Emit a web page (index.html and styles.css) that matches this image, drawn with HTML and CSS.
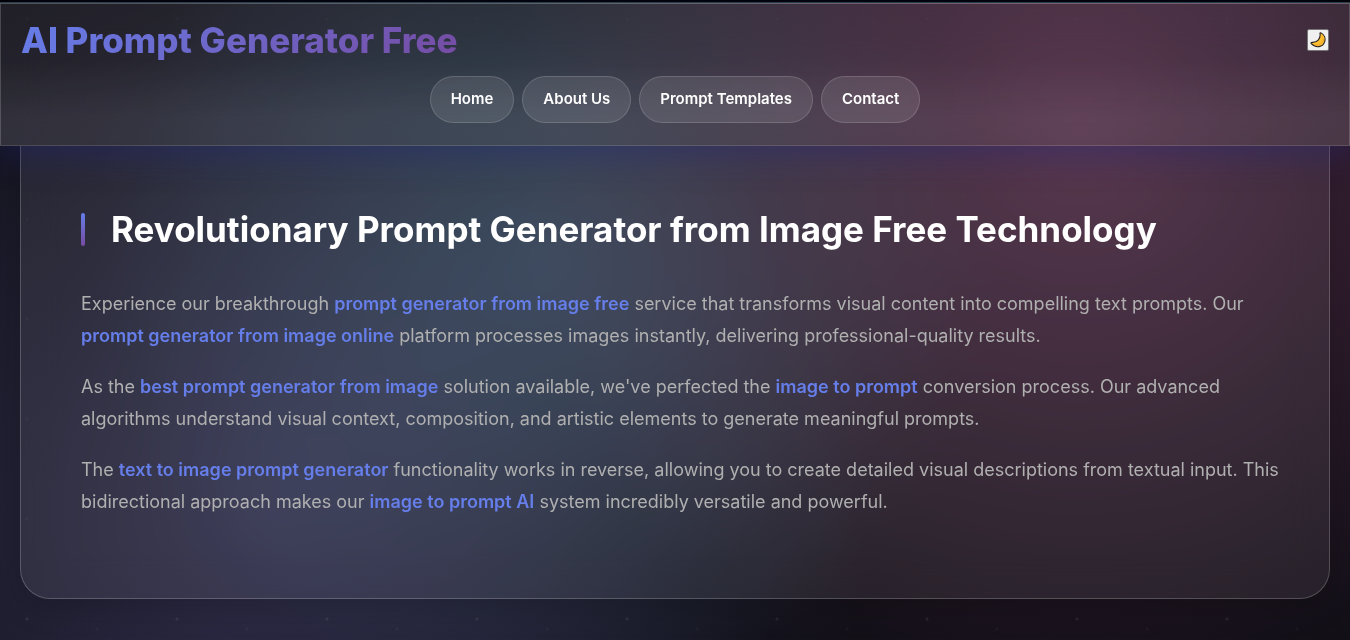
FILE: index.html
```html
<!DOCTYPE html>
<html lang="en">
<head>
<meta charset="utf-8">
<meta name="viewport" content="width=device-width, initial-scale=1">
<title>AI Prompt Generator Free</title>
<link rel="stylesheet" href="styles.css">
</head>
<body>
<div class="top-strip"></div>
<header class="header">
  <div class="header-top">
    <div class="logo">AI Prompt Generator Free</div>
    <button class="theme-toggle" type="button" aria-label="Toggle theme">
      <svg class="moon" viewBox="0 0 16 16" aria-hidden="true">
        <path d="M10.600 0.800C14.200 2.500 15.800 6.200 14.700 9.600C13 15.300 5.800 16.600 1 11.400C1 10.600 1.600 10.300 2.400 10.400C7.500 10.600 10.800 6.500 10 1.500C9.900 1 10.200 0.700 10.600 0.800Z" fill="#fdbf2d" stroke="#2b2420" stroke-width="1.100" stroke-linejoin="round"/>
        <path d="M13.600 6.500C13.500 10.500 9.500 13.800 5 13" fill="none" stroke="#f0a030" stroke-width="1"/>
      </svg>
    </button>
  </div>
  <nav class="nav">
    <a class="nav-link" href="#home">Home</a>
    <a class="nav-link" href="#about">About Us</a>
    <a class="nav-link" href="#templates">Prompt Templates</a>
    <a class="nav-link" href="#contact">Contact</a>
  </nav>
</header>
<main class="content">
  <section class="card">
    <h2 class="title">Revolutionary Prompt Generator from Image Free Technology</h2>
    <p class="text">Experience our breakthrough <strong class="keyword">prompt generator from image free</strong> service that transforms visual content into compelling text prompts. Our <strong class="keyword">prompt generator from image online</strong> platform processes images instantly, delivering professional-quality results.</p>
    <p class="text">As the <strong class="keyword">best prompt generator from image</strong> solution available, we've perfected the <strong class="keyword">image to prompt</strong> conversion process. Our advanced algorithms understand visual context, composition, and artistic elements to generate meaningful prompts.</p>
    <p class="text">The <strong class="keyword">text to image prompt generator</strong> functionality works in reverse, allowing you to create detailed visual descriptions from textual input. This bidirectional approach makes our <strong class="keyword">image to prompt AI</strong> system incredibly versatile and powerful.</p>
  </section>
</main>
</body>
</html>
```

FILE: styles.css
```css
* {
  box-sizing: border-box;
  margin: 0;
  padding: 0;
}

body {
  min-height: 100vh;
  background-color: #0f0e15;
  background-image:
    radial-gradient(circle at 20px 15px, rgba(255, 255, 255, 0.08) 1px, transparent 2px),
    radial-gradient(circle at 90px 25px, rgba(255, 255, 255, 0.03) 1px, transparent 2px),
    radial-gradient(circle at 20% 80%, rgba(120, 119, 198, 0.3) 0%, transparent 50%),
    radial-gradient(circle at 80% 20%, rgba(255, 119, 198, 0.26) 0%, transparent 50%),
    radial-gradient(circle at 40% 40%, rgba(120, 219, 255, 0.2) 0%, transparent 50%);
  background-size: 150px 100px, 150px 100px, 100% 100%, 100% 100%, 100% 100%;
  background-position: 7px 4px, 7px 4px, 0 0, 0 0, 0 0;
  background-attachment: fixed;
  color: #ffffff;
  font-family: Inter, "Liberation Sans", sans-serif;
  line-height: 1.6;
}

.top-strip {
  height: 3px;
  border-bottom: 1px solid #2b4146;
  background: #000000;
}

.header {
  position: relative;
  z-index: 2;
  padding: 8px 20px 22px;
  background: linear-gradient(180deg, rgba(255, 255, 255, 0.07) 40%, rgba(255, 255, 255, 0.12) 80%);
  border: 1px solid rgba(255, 255, 255, 0.18);
  backdrop-filter: blur(20px);
  box-shadow: 0 8px 32px rgba(31, 38, 135, 0.37);
}

.header-top {
  display: flex;
  align-items: center;
  justify-content: space-between;
}

.logo {
  background: linear-gradient(135deg, #667eea, #764ba2);
  background-clip: text;
  color: transparent;
  font-size: 35px;
  font-weight: 800;
}

.theme-toggle {
  display: flex;
  padding: 2px;
  border: 1px solid #777777;
  border-radius: 2px;
  background: #f0f0f0;
}

.moon {
  width: 16px;
  height: 16px;
}

.nav {
  display: flex;
  flex-wrap: wrap;
  justify-content: center;
  gap: 8px;
  padding-top: 8px;
}

.nav-link {
  padding: 9px 20px 11px;
  border: 1px solid rgba(255, 255, 255, 0.15);
  border-radius: 25px;
  background: rgba(255, 255, 255, 0.1);
  color: #ffffff;
  font-size: 15px;
  font-weight: 600;
  line-height: 25px;
  text-decoration: none;
}

.content {
  padding: 0 20px;
}

.card {
  padding: 60px 50px 80px 60px;
  border: 1px solid rgba(255, 255, 255, 0.2);
  border-top: 0;
  border-radius: 0 0 30px 30px;
  background: rgba(255, 255, 255, 0.07);
  backdrop-filter: blur(20px);
  box-shadow: 0 8px 32px rgba(0, 0, 0, 0.2);
}

.title {
  position: relative;
  margin-bottom: 36px;
  padding-left: 30px;
  font-size: 35px;
  font-weight: 700;
  line-height: 46px;
}

.title::before {
  content: "";
  position: absolute;
  top: 7px;
  bottom: 6px;
  left: 0;
  width: 4px;
  border-radius: 2px;
  background: linear-gradient(180deg, #667eea, #764ba2);
}

.text {
  margin-bottom: 19px;
  color: #b0b0b0;
  font-size: 18px;
  line-height: 32px;
}

.text:last-child {
  margin-bottom: 0;
}

.keyword {
  color: #667eea;
  font-weight: 600;
}
```
